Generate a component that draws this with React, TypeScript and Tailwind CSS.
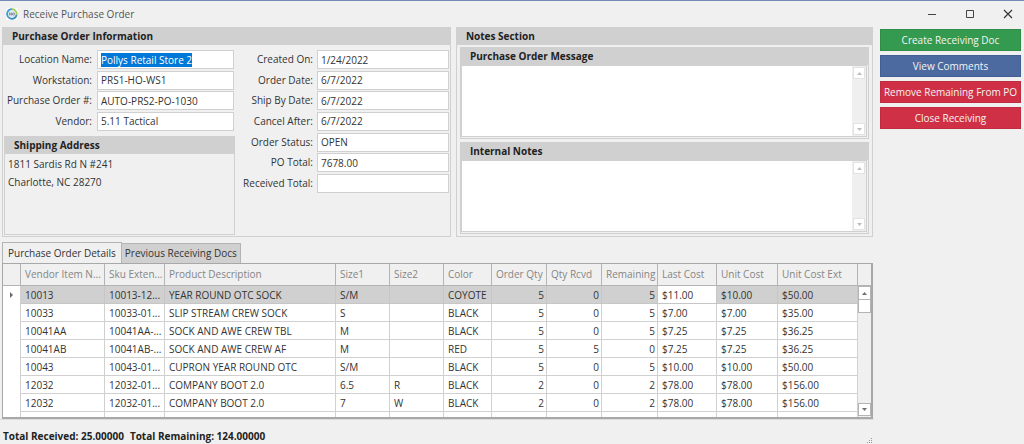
import { useEffect, useRef } from "react";
import type { ReactNode, RefObject } from "react";

type FieldData = { id: string; label: string; value: string };

const orderFields: FieldData[] = [
  { id: "location", label: "Location Name:", value: "Pollys Retail Store 2" },
  { id: "workstation", label: "Workstation:", value: "PRS1-HO-WS1" },
  { id: "po-number", label: "Purchase Order #:", value: "AUTO-PRS2-PO-1030" },
  { id: "vendor", label: "Vendor:", value: "5.11 Tactical" },
];

const dateFields: FieldData[] = [
  { id: "created", label: "Created On:", value: "1/24/2022" },
  { id: "ordered", label: "Order Date:", value: "6/7/2022" },
  { id: "ship-by", label: "Ship By Date:", value: "6/7/2022" },
  { id: "cancel", label: "Cancel After:", value: "6/7/2022" },
  { id: "status", label: "Order Status:", value: "OPEN" },
  { id: "po-total", label: "PO Total:", value: "7678.00" },
  { id: "received-total", label: "Received Total:", value: "" },
];

const columns = [
  { name: "Vendor Item N...", width: "w-[84px]" },
  { name: "Sku Exten...", width: "w-[60px]" },
  { name: "Product Description", width: "w-[171px]" },
  { name: "Size1", width: "w-[54px]" },
  { name: "Size2", width: "w-[54px]" },
  { name: "Color", width: "w-[48px]" },
  { name: "Order Qty", width: "w-[55px]", numeric: true },
  { name: "Qty Rcvd", width: "w-[55px]", numeric: true },
  { name: "Remaining", width: "w-[56px]", numeric: true },
  { name: "Last Cost", width: "w-[59px]" },
  { name: "Unit Cost", width: "w-[61px]" },
  { name: "Unit Cost Ext", width: "w-[80px]" },
];

const rows = [
  ["10013", "10013-12...", "YEAR ROUND OTC SOCK", "S/M", "", "COYOTE", "5", "0", "5", "$11.00", "$10.00", "$50.00"],
  ["10033", "10033-01...", "SLIP STREAM CREW SOCK", "S", "", "BLACK", "5", "0", "5", "$7.00", "$7.00", "$35.00"],
  ["10041AA", "10041AA-...", "SOCK AND AWE CREW TBL", "M", "", "BLACK", "5", "0", "5", "$7.25", "$7.25", "$36.25"],
  ["10041AB", "10041AB-...", "SOCK AND AWE CREW AF", "M", "", "RED", "5", "5", "0", "$7.25", "$7.25", "$36.25"],
  ["10043", "10043-01...", "CUPRON YEAR ROUND OTC", "S/M", "", "BLACK", "5", "0", "5", "$10.00", "$10.00", "$50.00"],
  ["12032", "12032-01...", "COMPANY BOOT 2.0", "6.5", "R", "BLACK", "2", "0", "2", "$78.00", "$78.00", "$156.00"],
  ["12032", "12032-01...", "COMPANY BOOT 2.0", "7", "W", "BLACK", "2", "0", "2", "$78.00", "$78.00", "$156.00"],
  ["", "", "", "", "", "", "", "", "", "", "", ""],
];

const LAST_COST = 9;

function Field({
  field,
  labelWidth,
  inputRef,
}: {
  field: FieldData;
  labelWidth: string;
  inputRef?: RefObject<HTMLInputElement | null>;
}) {
  return (
    <div className="flex items-center gap-1">
      <label htmlFor={field.id} className={`${labelWidth} shrink-0 text-right whitespace-nowrap`}>
        {field.label}
      </label>
      <input
        id={field.id}
        ref={inputRef}
        type="text"
        defaultValue={field.value}
        className="h-[19px] min-w-0 flex-1 border border-[#d0d0d0] bg-white px-[3px] leading-[14px] outline-none selection:bg-[#0078d7] selection:text-white"
      />
    </div>
  );
}

function PanelTitle({ children }: { children: ReactNode }) {
  return (
    <h2 className="h-[17px] bg-[#d0d0d0] px-[9px] font-bold leading-[17px] text-[#222222]">{children}</h2>
  );
}

function Triangle({ down, color }: { down?: boolean; color: string }) {
  return (
    <svg viewBox="0 0 5 3" className={`h-[3px] w-[5px] ${color}`} aria-hidden="true">
      <path d={down ? "M0 0h5L2.5 3z" : "M0 3h5L2.5 0z"} fill="currentColor" />
    </svg>
  );
}

function NotesBox({ id, title }: { id: string; title: string }) {
  return (
    <section className="border border-[#d0d0d0]">
      <PanelTitle>
        <label htmlFor={id}>{title}</label>
      </PanelTitle>
      <div className="mr-px mb-px flex h-[72px] border border-[#d0d0d0] bg-white">
        <textarea id={id} className="min-w-0 flex-1 resize-none bg-white px-1 outline-none" />
        <div className="flex w-[14px] flex-col justify-between bg-[#efefef] p-px">
          <button aria-label="Scroll up" className="flex h-[12px] items-center justify-center border border-[#e2e2e2] bg-white">
            <Triangle color="text-[#bdbdbd]" />
          </button>
          <button aria-label="Scroll down" className="flex h-[12px] items-center justify-center border border-[#e2e2e2] bg-white">
            <Triangle down color="text-[#bdbdbd]" />
          </button>
        </div>
      </div>
    </section>
  );
}

function TitleBar() {
  return (
    <header className="flex h-[27px] items-center border-t border-[#6f8ab7] pl-[6px] text-[#555555]">
      <svg viewBox="0 0 12 12" className="h-3 w-3" aria-hidden="true">
        <rect width="12" height="12" fill="#f8fafb" />
        <circle cx="6" cy="6" r="3.6" fill="#dfe9ee" />
        <path d="M6 1.2A4.8 4.8 0 0 0 2.2 9" fill="none" stroke="#3a9fd0" strokeWidth="1.8" />
        <path d="M6 1.2A4.8 4.8 0 0 1 10.6 7" fill="none" stroke="#a2cc5a" strokeWidth="1.8" />
        <path d="M2.2 9A4.8 4.8 0 0 0 10.6 7" fill="none" stroke="#3f8fc6" strokeWidth="1.8" />
        <path d="M3.6 4.6v2.8M5.4 4.6v2.8M3.6 6h1.8" stroke="#5d6a73" strokeWidth="0.7" />
        <circle cx="7.5" cy="6" r="1.1" fill="none" stroke="#5d6a73" strokeWidth="0.7" />
      </svg>
      <h1 className="ml-[5px] flex-1">Receive Purchase Order</h1>
      <div className="flex gap-[6px]">
        <button aria-label="Minimize" className="flex h-6 w-8 items-center justify-center">
          <svg viewBox="0 0 10 10" className="h-[10px] w-[10px]">
            <path d="M1 5.5h8" stroke="#444444" />
          </svg>
        </button>
        <button aria-label="Maximize" className="flex h-6 w-8 items-center justify-center">
          <svg viewBox="0 0 10 10" className="h-[10px] w-[10px]">
            <path d="M1.5 1.5h7v7h-7z" fill="none" stroke="#444444" />
          </svg>
        </button>
        <button aria-label="Close" className="flex h-6 w-8 items-center justify-center">
          <svg viewBox="0 0 10 10" className="h-[10px] w-[10px]">
            <path d="M1 1l8 8M9 1l-8 8" stroke="#333333" strokeWidth="1.1" />
          </svg>
        </button>
      </div>
    </header>
  );
}

function DetailsTable() {
  return (
    <div className="flex h-[156px] overflow-hidden border-t border-r-2 border-b-2 border-l border-[#a8a8a8] bg-white">
      <div className="min-w-0 flex-1 overflow-hidden">
        <table className="w-full table-fixed border-separate border-spacing-0">
          <thead>
            <tr className="h-[22px] text-left text-[#858585]">
              <th aria-label="Current row" className="w-[18px] border-r border-b border-[#b4b4b4] bg-[#f0f0f0]" />
              {columns.map((column) => (
                <th
                  key={column.name}
                  className={`${column.width} overflow-hidden border-r border-b border-[#b4b4b4] bg-[#f0f0f0] p-0 pl-1 font-normal whitespace-nowrap`}
                >
                  {column.name}
                </th>
              ))}
            </tr>
          </thead>
          <tbody>
            {rows.map((row, rowIndex) => (
              <tr key={rowIndex} className="h-[18px] leading-4">
                <td className="border-r border-[#d0d0d0] p-0">
                  {rowIndex === 0 && (
                    <svg viewBox="0 0 3 6" className="mx-auto h-[6px] w-[3px]" aria-hidden="true">
                      <path d="M0 0l3 3-3 3z" fill="#6a6a6a" />
                    </svg>
                  )}
                </td>
                {row.map((cell, i) => (
                  <td
                    key={i}
                    className={`overflow-hidden border-r border-b p-0 whitespace-nowrap ${
                      rowIndex === 0 && i !== LAST_COST ? "bg-[#d0d0d0]" : "bg-white"
                    } ${columns[i].numeric ? "pr-[2px] text-right" : "pl-1"} ${
                      rowIndex === 0 ? "border-[#c6c6c6]" : "border-[#d0d0d0]"
                    }`}
                  >
                    {cell}
                  </td>
                ))}
              </tr>
            ))}
          </tbody>
        </table>
      </div>
      <div className="flex w-[13px] flex-col bg-[#f0f0f0]">
        <div className="h-[22px] border-b border-[#b4b4b4]" />
        <button aria-label="Scroll up" className="flex h-[14px] items-center justify-center border border-[#b4b4b4] bg-white">
          <Triangle color="text-[#707070]" />
        </button>
        <div className="h-[13px] border border-t-0 border-[#b4b4b4] bg-white" />
        <div className="flex-1" />
        <button aria-label="Scroll down" className="mb-px flex h-[13px] items-center justify-center border border-[#b4b4b4] bg-white">
          <Triangle down color="text-[#707070]" />
        </button>
      </div>
    </div>
  );
}

export default function App() {
  const locationRef = useRef<HTMLInputElement>(null);

  useEffect(() => {
    locationRef.current?.focus();
    locationRef.current?.select();
  }, []);

  const action = "h-[22px] border text-center leading-5 whitespace-nowrap text-[#f4f4f4]";

  return (
    <div className="min-h-screen bg-[#f0f0f0] font-['Open_Sans','Noto_Sans',sans-serif] text-[10px] leading-[15px] text-[#333333]">
      <TitleBar />
      <div className="flex gap-[7px] pr-[3px] pl-[2px]">
        <main className="min-w-0 flex-1">
          <div className="flex gap-[5px]">
            <section className="min-w-0 flex-[449] border border-[#d0d0d0]">
              <PanelTitle>Purchase Order Information</PanelTitle>
              <div className="flex px-px pt-[5px]">
                <div className="min-w-0 flex-[231]">
                  <div className="flex h-[81px] flex-col justify-between pr-px">
                    {orderFields.map((field, i) => (
                      <Field key={field.id} field={field} labelWidth="w-[89px] pr-px" inputRef={i === 0 ? locationRef : undefined} />
                    ))}
                  </div>
                  <section className="mt-[5px] mb-px h-[99px] border border-[#d0d0d0]">
                    <PanelTitle>Shipping Address</PanelTitle>
                    <address className="px-[3px] pt-px leading-[18px] not-italic">
                      1811 Sardis Rd N #241
                      <br />
                      Charlotte, NC 28270
                    </address>
                  </section>
                </div>
                <div className="flex h-[143px] min-w-0 flex-[214] flex-col justify-between">
                  {dateFields.map((field) => (
                    <Field key={field.id} field={field} labelWidth="w-[78px]" />
                  ))}
                </div>
              </div>
            </section>

            <section className="min-w-0 flex-[417] border border-[#d0d0d0]">
              <PanelTitle>Notes Section</PanelTitle>
              <div className="flex flex-col gap-[3px] px-[3px] pt-[2px]">
                <NotesBox id="po-message" title="Purchase Order Message" />
                <NotesBox id="internal-notes" title="Internal Notes" />
              </div>
            </section>
          </div>

          <div role="tablist" className="mt-[5px] flex items-end">
            <button
              role="tab"
              aria-selected="true"
              className="h-[21px] border border-b-0 border-[#b4b4b4] px-[5px] whitespace-nowrap"
            >
              Purchase Order Details
            </button>
            <button
              role="tab"
              aria-selected="false"
              className="h-5 border border-b-0 border-l-0 border-[#b4b4b4] bg-[#d0d0d0] px-[3px] whitespace-nowrap"
            >
              Previous Receiving Docs
            </button>
          </div>
          <DetailsTable />
        </main>

        <aside className="flex w-[141px] shrink-0 flex-col gap-1 pt-[2px]">
          <button className={`${action} border-[#2f8d48] bg-[#349a50]`}>Create Receiving Doc</button>
          <button className={`${action} border-[#425f94] bg-[#4c6a9f]`}>View Comments</button>
          <button className={`${action} border-[#c02b40] bg-[#d03045]`}>Remove Remaining From PO</button>
          <button className={`${action} border-[#c02b40] bg-[#d03045]`}>Close Receiving</button>
        </aside>
      </div>

      <footer className="mr-[150px] flex h-[25px] items-end justify-between border-t border-[#dcdcdc] pl-[3px] font-bold text-[#222222]">
        <p className="flex gap-[6px]">
          <span>Total Received: 25.00000</span>
          <span>Total Remaining: 124.00000</span>
        </p>
        <svg viewBox="0 0 6 6" className="mr-px h-[6px] w-[6px]" aria-hidden="true">
          <path d="M4 0h1v1h-1zM2 2h1v1h-1zM4 2h1v1h-1zM0 4h1v1h-1zM2 4h1v1h-1zM4 4h1v1h-1z" fill="#9a9a9a" />
        </svg>
      </footer>
    </div>
  );
}
